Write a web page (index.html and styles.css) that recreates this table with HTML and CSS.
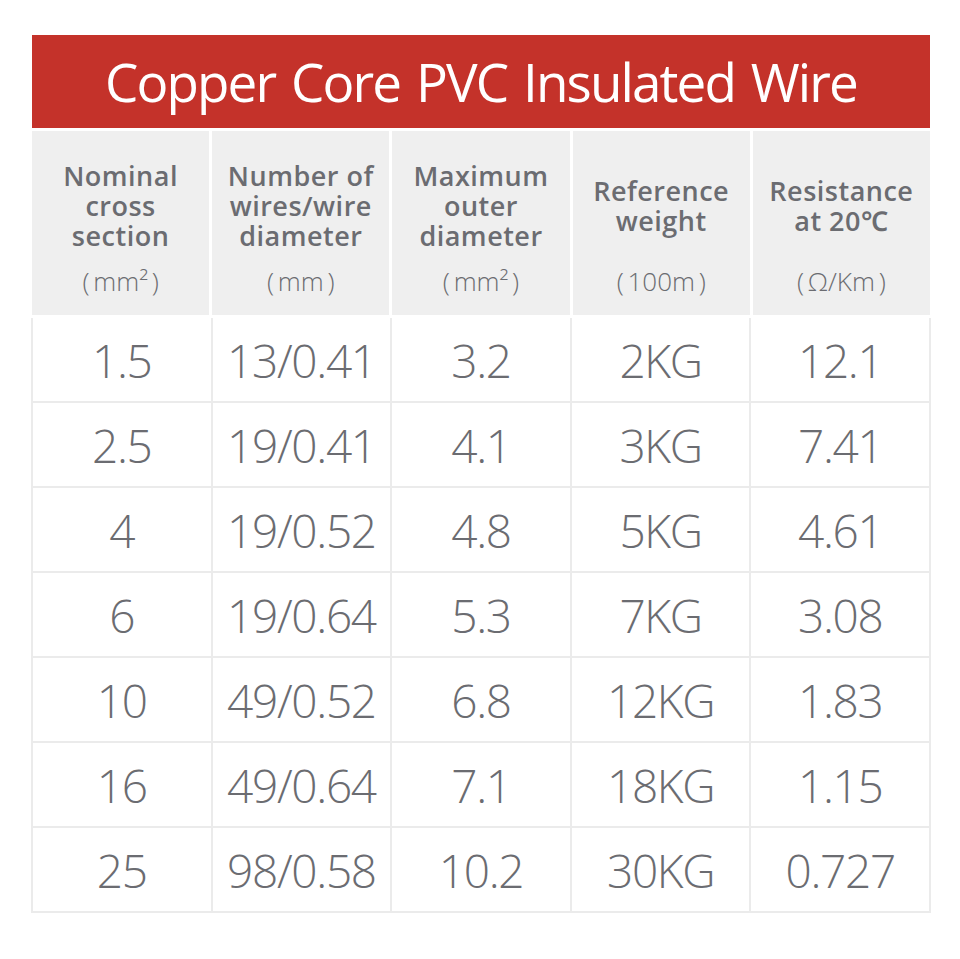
FILE: index.html
```html
<!DOCTYPE html>
<html>
<head>
<meta charset="utf-8">
<link rel="stylesheet" href="styles.css">
</head>
<body>
<div class="sheet">
  <div class="title">Copper Core PVC Insulated Wire</div>
  <div class="head">
    <div class="h-cell"><div class="h-title">Nominal<br>cross<br>section</div><div class="h-unit">( mm² )</div></div>
    <div class="h-cell"><div class="h-title">Number of<br>wires/wire<br>diameter</div><div class="h-unit">( mm )</div></div>
    <div class="h-cell"><div class="h-title">Maximum<br>outer<br>diameter</div><div class="h-unit">( mm² )</div></div>
    <div class="h-cell"><div class="h-title">Reference<br>weight</div><div class="h-unit">( 100m )</div></div>
    <div class="h-cell"><div class="h-title">Resistance<br>at 20℃</div><div class="h-unit">( Ω/Km )</div></div>
  </div>
  <div class="data">
    <div class="d">1.5</div><div class="d">13/0.41</div><div class="d">3.2</div><div class="d">2KG</div><div class="d">12.1</div>
    <div class="d">2.5</div><div class="d">19/0.41</div><div class="d">4.1</div><div class="d">3KG</div><div class="d">7.41</div>
    <div class="d">4</div><div class="d">19/0.52</div><div class="d">4.8</div><div class="d">5KG</div><div class="d">4.61</div>
    <div class="d">6</div><div class="d">19/0.64</div><div class="d">5.3</div><div class="d">7KG</div><div class="d">3.08</div>
    <div class="d">10</div><div class="d">49/0.52</div><div class="d">6.8</div><div class="d">12KG</div><div class="d">1.83</div>
    <div class="d">16</div><div class="d">49/0.64</div><div class="d">7.1</div><div class="d">18KG</div><div class="d">1.15</div>
    <div class="d">25</div><div class="d">98/0.58</div><div class="d">10.2</div><div class="d">30KG</div><div class="d">0.727</div>
  </div>
</div>
</body>
</html>
```

FILE: styles.css
```css
html, body {
  margin: 0;
  padding: 0;
  background: #ffffff;
}
body {
  font-family: "Open Sans", "Noto Sans", sans-serif;
  color: #6b6c71;
}
.sheet {
  width: 898px;
  margin: 35px 0 0 32px;
}
.title {
  height: 93px;
  background: #c4322a;
  color: #ffffff;
  font-size: 53px;
  font-weight: 400;
  letter-spacing: -1.9px;
  word-spacing: 4px;
  line-height: 93px;
  text-align: center;
}
.head {
  display: grid;
  grid-template-columns: repeat(5, 1fr);
  column-gap: 3px;
  margin-top: 3px;
}
.h-cell {
  height: 184px;
  background: #efefef;
  display: flex;
  flex-direction: column;
  align-items: center;
  text-align: center;
}
.h-title {
  margin-top: 15px;
  height: 120px;
  display: flex;
  align-items: center;
  justify-content: center;
  font-size: 27px;
  line-height: 30px;
  font-weight: 600;
  letter-spacing: 0.5px;
}
.h-unit {
  font-size: 26px;
  line-height: 30px;
  font-weight: 300;
  word-spacing: -3px;
}
.data {
  display: grid;
  grid-template-columns: repeat(5, 1fr);
  gap: 2px;
  margin: 3px 0 0 -1px;
  width: 900px;
  padding: 0 2px 2px 2px;
  box-sizing: border-box;
  background: #ebebeb;
}
.d {
  height: 83px;
  background: #ffffff;
  display: flex;
  align-items: center;
  justify-content: center;
  font-size: 46px;
  font-weight: 350;
  letter-spacing: -1.3px;
}
```
